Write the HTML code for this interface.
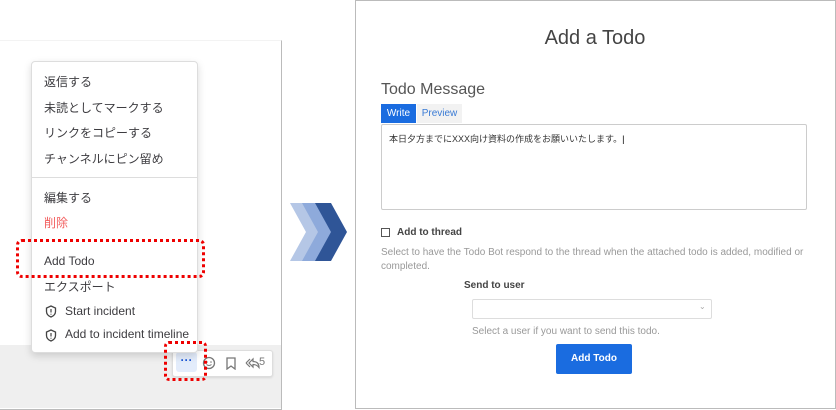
<!DOCTYPE html><html><head><meta charset="utf-8"><style>
body{margin:0;width:836px;height:409px;background:#fff;position:relative;overflow:hidden;font-family:"Liberation Sans","Noto Sans CJK JP",sans-serif;}
.a{position:absolute}
.mi{position:absolute;left:44px;font-size:12px;color:#3d3c40}
</style></head><body>
<div class="a" style="left:0;top:40px;width:281px;height:368px;border-right:1px solid #bbb;border-bottom:1px solid #bbb;border-top:1px solid #f3f3f3;background:#fff"></div>
<div class="a" style="left:0;top:345px;width:281px;height:63px;background:#efefef"></div>
<div class="a" style="left:172px;top:350px;width:99px;height:25px;background:#fff;border:1px solid #ddd;border-radius:3px;box-shadow:0 1px 2px rgba(0,0,0,.1)"></div>
<div class="a" style="left:176px;top:352px;width:21px;height:20px;background:#e3ecfb;border-radius:3px;color:#1c58d9;font-size:12px;text-align:center;line-height:16px;font-weight:bold">···</div>
<svg class="a" style="left:202px;top:356px" width="70" height="14"><circle cx="7" cy="7" r="5.5" fill="none" stroke="#777" stroke-width="1.3"/><circle cx="5" cy="6" r=".8" fill="#777"/><circle cx="9" cy="6" r=".8" fill="#777"/><path d="M4.5 8.5q2.5 2 5 0" fill="none" stroke="#777"/><path d="M25 2h8v11l-4-3-4 3z" fill="none" stroke="#777" stroke-width="1.3"/><path d="M47 7l4-4v2.5c4 0 6 2 6 6-1.5-2-3-3-6-3V11z" fill="none" stroke="#777" stroke-width="1.2"/><path d="M44 7l4-4M44 7l4 4" stroke="#777" stroke-width="1.2"/></svg>
<div class="a" style="left:259px;top:356px;font-size:11px;color:#777">5</div>
<div class="a" style="left:31px;top:61px;width:165px;height:290px;background:#fff;border:1px solid #ddd;border-radius:4px;box-shadow:0 3px 8px rgba(0,0,0,.15)"></div>
<div class="mi" style="top:73px">返信する</div>
<div class="mi" style="top:99px">未読としてマークする</div>
<div class="mi" style="top:124px">リンクをコピーする</div>
<div class="mi" style="top:150px">チャンネルにピン留め</div>
<div class="a" style="left:32px;top:177px;width:165px;height:1px;background:#ddd"></div>
<div class="mi" style="top:189px">編集する</div>
<div class="mi" style="top:214px;color:#f25c5c">削除</div>
<div class="mi" style="top:254px">Add Todo</div>
<div class="mi" style="top:278px">エクスポート</div>
<div class="mi" style="top:304px;left:65px">Start incident</div>
<div class="mi" style="top:327px;left:65px">Add to incident timeline</div>
<svg class="a" style="left:45px;top:305px" width="12" height="40"><path d="M6 1l4.5 2v3.5C10.5 9.5 8.5 11 6 12 3.5 11 1.5 9.5 1.5 6.5V3z" fill="none" stroke="#444" stroke-width="1.3"/><path d="M6 4v3.5M6 8.8v.8" stroke="#444" stroke-width="1.2"/><g transform="translate(0,24)"><path d="M6 1l4.5 2v3.5C10.5 9.5 8.5 11 6 12 3.5 11 1.5 9.5 1.5 6.5V3z" fill="none" stroke="#444" stroke-width="1.3"/><path d="M6 4v3.5M6 8.8v.8" stroke="#444" stroke-width="1.2"/></g></svg>
<div class="a" style="left:16px;top:239px;width:189px;height:39px;border:3px dotted #e00;border-radius:6px;box-sizing:border-box"></div>
<div class="a" style="left:164px;top:341px;width:43px;height:40px;border:3px dotted #e00;border-radius:5px;box-sizing:border-box"></div>
<svg class="a" style="left:288px;top:202px" width="62" height="62"><polygon points="2,1 19,1 35,30 19,59 2,59 18,30" fill="#b5c7e6"/><polygon points="14,1 31,1 47,30 31,59 14,59 30,30" fill="#8eaadb"/><polygon points="27,1 43,1 59,30 43,59 27,59 43,30" fill="#2f5597"/></svg>
<div class="a" style="left:355px;top:0;width:479px;height:407px;border:1px solid #bbb"></div>
<div class="a" style="left:355px;top:27px;width:480px;text-align:center;font-size:20px;color:#444">Add a Todo</div>
<div class="a" style="left:381px;top:81px;font-size:16px;color:#555">Todo Message</div>
<div class="a" style="left:381px;top:104px;width:35px;height:19px;background:#1a6ce0;color:#fff;font-size:10px;text-align:center;line-height:19px">Write</div>
<div class="a" style="left:417px;top:104px;width:45px;height:19px;background:#f2f2f2;color:#3a7bd5;font-size:10px;text-align:center;line-height:19px">Preview</div>
<div class="a" style="left:381px;top:124px;width:424px;height:84px;border:1px solid #ccc;border-radius:2px"></div>
<div class="a" style="left:389px;top:132px;font-size:9px;color:#333">本日夕方までにXXX向け資料の作成をお願いいたします。<span style="color:#000">|</span></div>
<div class="a" style="left:381px;top:228px;width:7px;height:7px;border:1px solid #555"></div>
<div class="a" style="left:397px;top:227px;font-size:10px;font-weight:bold;color:#444">Add to thread</div>
<div class="a" style="left:381px;top:246px;width:440px;font-size:10px;color:#999;line-height:14px">Select to have the Todo Bot respond to the thread when the attached todo is added, modified or completed.</div>
<div class="a" style="left:464px;top:280px;font-size:10px;font-weight:bold;color:#444">Send to user</div>
<div class="a" style="left:472px;top:299px;width:238px;height:18px;border:1px solid #ddd;border-radius:2px"></div>
<div class="a" style="left:699px;top:302px;font-size:8px;color:#aaa">⌄</div>
<div class="a" style="left:472px;top:326px;font-size:10px;color:#999">Select a user if you want to send this todo.</div>
<div class="a" style="left:556px;top:344px;width:76px;height:30px;background:#1a6ce0;border-radius:2px;color:#fff;font-size:10px;font-weight:bold;text-align:center;line-height:30px">Add Todo</div>
</body></html>
